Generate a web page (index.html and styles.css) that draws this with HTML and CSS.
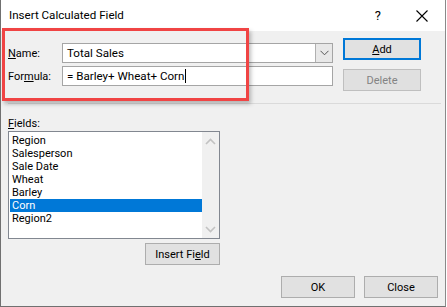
FILE: index.html
```html
<!DOCTYPE html>
<html>
<head>
<meta charset="utf-8">
<link rel="stylesheet" href="styles.css">
</head>
<body>
<div class="dialog">
  <div class="titlebar">
    <span class="title">Insert Calculated Field</span>
    <span class="help">?</span>
    <svg class="close-x" width="12" height="12" viewBox="0 0 12 12"><path d="M0.5 0.5 L11.5 11.5 M11.5 0.5 L0.5 11.5" stroke="#000" stroke-width="1.1" fill="none"/></svg>
  </div>
  <div class="content">
    <div class="top">
      <div class="form">
        <div class="row">
          <label class="lbl"><u>N</u>ame:</label>
          <div class="combo">
            <span class="field-text">Total Sales</span>
            <span class="drop"><svg width="9" height="6" viewBox="0 0 9 6"><path d="M0.5 0.8 L4.5 4.8 L8.5 0.8" stroke="#555" stroke-width="1" fill="none"/></svg></span>
          </div>
        </div>
        <div class="row">
          <label class="lbl">For<u>m</u>ula:</label>
          <div class="textbox">
            <span class="field-text">= Barley+ Wheat+ Corn</span><span class="caret"></span>
          </div>
        </div>
      </div>
      <div class="side">
        <div class="btn btn-default"><u>A</u>dd</div>
        <div class="btn btn-disabled">Delete</div>
      </div>
    </div>
    <div class="sep"></div>
    <div class="fields-lbl"><u>F</u>ields:</div>
    <div class="fields-col">
      <div class="listbox">
        <ul class="items">
          <li>Region</li>
          <li>Salesperson</li>
          <li>Sale Date</li>
          <li>Wheat</li>
          <li>Barley</li>
          <li class="sel">Corn</li>
          <li>Region2</li>
        </ul>
        <div class="scroll">
          <svg width="11" height="7" viewBox="0 0 11 7"><path d="M1 6 L5.5 1.5 L10 6" stroke="#c2c2c2" stroke-width="1.6" fill="none"/></svg>
          <svg width="11" height="7" viewBox="0 0 11 7"><path d="M1 1 L5.5 5.5 L10 1" stroke="#c2c2c2" stroke-width="1.6" fill="none"/></svg>
        </div>
      </div>
      <div class="btn btn-insert">Insert Fi<u>e</u>ld</div>
    </div>
    <div class="footer">
      <div class="btn">OK</div>
      <div class="btn">Close</div>
    </div>
  </div>
  <div class="highlight"></div>
</div>
</body>
</html>
```
FILE: styles.css
```css
html, body {
  margin: 0;
  padding: 0;
  background: #ffffff;
}
body {
  font-family: Roboto, "Noto Sans", sans-serif;
  font-size: 11px;
  color: #000;
}
.dialog {
  position: relative;
  width: 446px;
  height: 307px;
  box-sizing: border-box;
  border-left: 1px solid #707070;
  border-right: 1px solid #8a8a8a;
  border-bottom: 1px solid #707070;
  background: #f0f0f0;
  overflow: hidden;
}
.titlebar {
  height: 31px;
  background: #ffffff;
  display: flex;
  align-items: center;
  padding-left: 8px;
  padding-right: 17px;
  box-sizing: border-box;
}
.title {
  font-size: 11.6px;
  flex: 1;
  padding-bottom: 1px;
}
.help {
  font-size: 13px;
  margin-right: 35px;
}
.close-x {
  display: block;
}
.content {
  display: flex;
  flex-direction: column;
  padding: 0 6px 0 6px;
}
.top {
  display: flex;
  height: 71px;
}
.form {
  display: flex;
  flex-direction: column;
  gap: 3px;
  padding-top: 12px;
}
.row {
  display: flex;
  align-items: center;
}
.lbl {
  width: 54px;
  padding-left: 1px;
}
.combo, .textbox {
  display: flex;
  align-items: center;
  width: 271px;
  height: 20px;
  box-sizing: border-box;
  border: 1px solid #a5a5a5;
  background: #fff;
}
.field-text {
  padding-left: 4px;
  white-space: pre;
  font-size: 11.6px;
}
.combo .field-text { flex: 1; }
.drop {
  width: 17px;
  height: 18px;
  box-sizing: border-box;
  border-left: 1px solid #b0b0b0;
  background: #e8e8e8;
  display: flex;
  align-items: center;
  justify-content: center;
}
.caret {
  display: inline-block;
  width: 1px;
  height: 14px;
  background: #000;
  margin-left: 1px;
}
.side {
  display: flex;
  flex-direction: column;
  gap: 9px;
  padding-top: 7px;
  margin-left: 10px;
}
.btn {
  width: 78px;
  height: 22px;
  box-sizing: border-box;
  border: 1px solid #adadad;
  background: #e1e1e1;
  display: flex;
  align-items: center;
  justify-content: center;
}
.btn-default {
  border: 2px solid #0078d7;
}
.btn-disabled {
  color: #838383;
  background: #e0e0e0;
  border-color: #bfbfbf;
}
.sep {
  height: 1px;
  background: #dadada;
  margin: 1px 0 0 1px;
  width: 433px;
}
.fields-lbl {
  margin-top: 12px;
  padding-left: 1px;
  height: 15px;
  line-height: 15px;
}
.fields-col {
  display: flex;
  flex-direction: column;
  align-items: flex-end;
  width: 212px;
  margin-left: 1px;
}
.listbox {
  width: 212px;
  height: 108px;
  box-sizing: border-box;
  border: 1px solid #828790;
  background: #fff;
  display: flex;
}
.items {
  list-style: none;
  margin: 0;
  padding: 2px 0 0 1px;
  flex: 1;
}
.items li {
  height: 13px;
  line-height: 13px;
  padding-left: 2px;
}
.items li.sel {
  background: #0078d7;
  color: #fff;
}
.scroll {
  width: 17px;
  background: #f0f0f0;
  display: flex;
  flex-direction: column;
  justify-content: space-between;
  align-items: center;
  padding: 6px 0 5px;
  box-sizing: border-box;
}
.scroll svg { display: block; }
.btn-insert {
  width: 75px;
  margin-top: 4px;
}
.footer {
  display: flex;
  justify-content: flex-end;
  gap: 9px;
  margin-top: 11px;
  padding-right: 1px;
}
.footer .btn {
  width: 74px;
}
.highlight {
  position: absolute;
  left: 1px;
  top: 28px;
  width: 247px;
  height: 73px;
  box-sizing: border-box;
  border: 3px solid #f04444;
  box-shadow: 2px 3px 4px rgba(0,0,0,0.25);
  pointer-events: none;
}
```
